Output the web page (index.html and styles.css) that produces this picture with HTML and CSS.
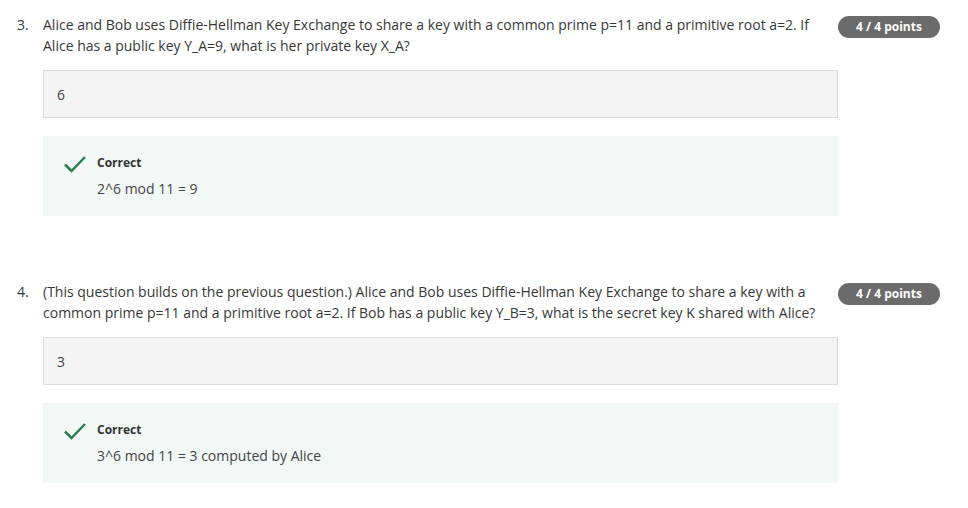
FILE: index.html
```html
<!DOCTYPE html>
<html lang="en">
<head>
<meta charset="utf-8">
<title>Quiz</title>
<link rel="stylesheet" href="styles.css">
</head>
<body>
<main class="quiz">
  <section class="question">
    <div class="qnum">3.</div>
    <div class="qbody">
      <div class="prompt">Alice and Bob uses Diffie-Hellman Key Exchange to share a key with a common prime p=11 and a primitive root a=2. If Alice has a public key Y_A=9, what is her private key X_A?</div>
      <div class="answer">6</div>
      <div class="feedback">
        <svg class="check" width="22" height="18" viewBox="0 0 22 18"><polyline points="1,9.5 7.5,16 21,2" fill="none" stroke="#2a7f4f" stroke-width="2.5"/></svg>
        <div class="fb-text">
          <div class="fb-title">Correct</div>
          <div class="fb-expl">2^6 mod 11 = 9</div>
        </div>
      </div>
    </div>
    <div class="badge">4 / 4 points</div>
  </section>
  <section class="question">
    <div class="qnum">4.</div>
    <div class="qbody">
      <div class="prompt">(This question builds on the previous question.) Alice and Bob uses Diffie-Hellman Key Exchange to share a key with a common prime p=11 and a primitive root a=2. If Bob has a public key Y_B=3, what is the secret key K shared with Alice?</div>
      <div class="answer">3</div>
      <div class="feedback">
        <svg class="check" width="22" height="18" viewBox="0 0 22 18"><polyline points="1,9.5 7.5,16 21,2" fill="none" stroke="#2a7f4f" stroke-width="2.5"/></svg>
        <div class="fb-text">
          <div class="fb-title">Correct</div>
          <div class="fb-expl">3^6 mod 11 = 3 computed by Alice</div>
        </div>
      </div>
    </div>
    <div class="badge">4 / 4 points</div>
  </section>
</main>
</body>
</html>
```
FILE: styles.css
```css
html, body {
  margin: 0;
  padding: 0;
  background: #ffffff;
}
body {
  font-family: "Open Sans", "Liberation Sans", sans-serif;
  font-size: 14px;
  line-height: 21px;
  color: #373737;
}
.quiz {
  padding: 14px 28px 0 17px;
  display: flex;
  flex-direction: column;
  gap: 65px;
}
.question {
  display: grid;
  grid-template-columns: 26px 795px 102px;
  align-items: start;
}
.qbody {
  display: flex;
  flex-direction: column;
}
.answer {
  margin-top: 14px;
  height: 46px;
  box-sizing: content-box;
  border: 1px solid #dcdcdc;
  background: #f4f4f4;
  display: flex;
  align-items: center;
  padding: 0 13px;
  color: #444444;
}
.feedback {
  margin-top: 18px;
  background: #f3f8f7;
  height: 80px;
  box-sizing: border-box;
  padding: 18px 21px 0 21px;
  display: flex;
  gap: 11px;
}
.check {
  display: block;
  margin-top: 1px;
  flex: none;
}
.fb-text {
  display: flex;
  flex-direction: column;
  gap: 6px;
}
.fb-title {
  font-size: 12px;
  font-weight: 700;
  line-height: 18px;
  color: #333333;
}
.fb-expl {
  color: #444444;
}
.badge {
  margin-top: 2px;
  height: 22px;
  border-radius: 11px;
  background: #6b6b6b;
  color: #ffffff;
  font-size: 12px;
  font-weight: 700;
  line-height: 22px;
  text-align: center;
}
```
